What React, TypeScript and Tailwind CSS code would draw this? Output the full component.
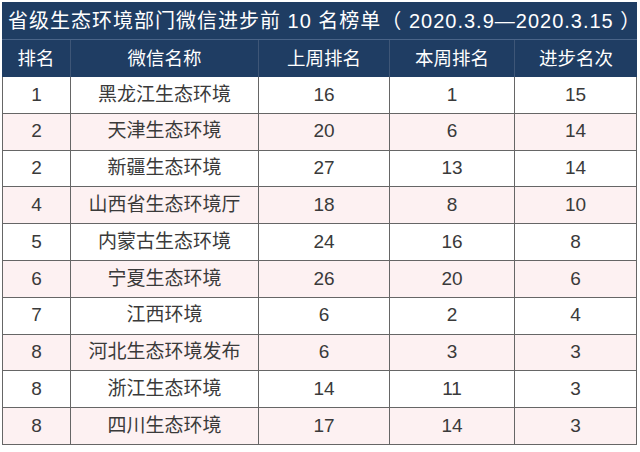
import React from "react";

const rows: [string, string, string, string, string][] = [
  ["1", "黑龙江生态环境", "16", "1", "15"],
  ["2", "天津生态环境", "20", "6", "14"],
  ["2", "新疆生态环境", "27", "13", "14"],
  ["4", "山西省生态环境厅", "18", "8", "10"],
  ["5", "内蒙古生态环境", "24", "16", "8"],
  ["6", "宁夏生态环境", "26", "20", "6"],
  ["7", "江西环境", "6", "2", "4"],
  ["8", "河北生态环境发布", "6", "3", "3"],
  ["8", "浙江生态环境", "14", "11", "3"],
  ["8", "四川生态环境", "17", "14", "3"],
];

const headers = ["排名", "微信名称", "上周排名", "本周排名", "进步名次"];

export default function App() {
  return (
    <div
      className="w-[640px] h-[452px] bg-white pt-[2px] pl-[2px]"
      style={{ fontFamily: '"Liberation Sans", "Noto Sans CJK SC", sans-serif' }}
    >
      <div className="w-[635px]">
        <div className="h-[38px] bg-[#1f3d63] text-white text-[20px] tracking-[1px] flex items-center pl-[6px] whitespace-nowrap border-b border-[#4a6488]">
          省级生态环境部门微信进步前 10 名榜单（ 2020.3.9—2020.3.15 ）
        </div>
        <div className="grid grid-cols-[69px_188px_131px_125px_122px] h-[37px] bg-[#1f3d63] text-white text-[18.5px]">
          {headers.map((h, i) => (
            <div
              key={i}
              className={`flex items-center justify-center ${i < 4 ? "border-r border-[#3e5677]" : ""}`}
            >
              {h}
            </div>
          ))}
        </div>
        <div className="border-l border-[#666]">
          {rows.map((r, ri) => (
            <div
              key={ri}
              className={`grid grid-cols-[68px_188px_131px_125px_122px] h-[36.8px] text-[19px] text-[#3a3a3a] ${ri % 2 === 1 ? "bg-[#fdf1f2]" : "bg-white"}`}
            >
              {r.map((c, ci) => (
                <div
                  key={ci}
                  className="flex items-center justify-center border-r border-b border-[#666]"
                >
                  {c}
                </div>
              ))}
            </div>
          ))}
        </div>
      </div>
    </div>
  );
}
